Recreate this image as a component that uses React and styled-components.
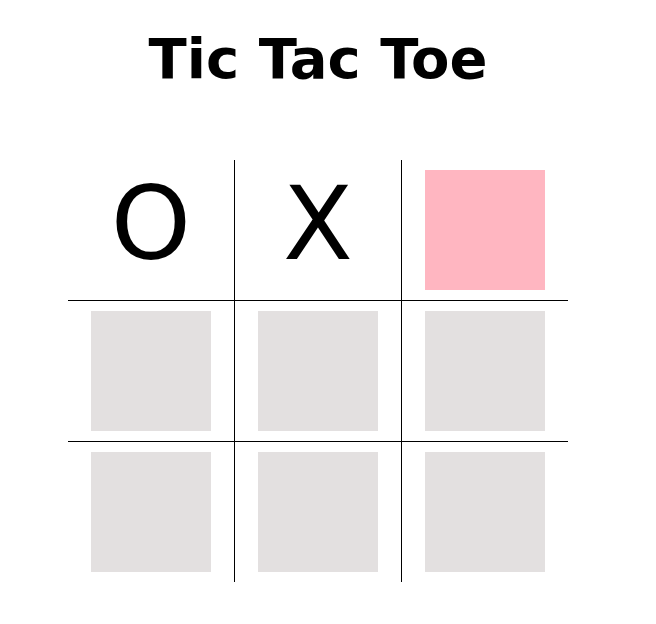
import React from 'react';
import styled, { createGlobalStyle } from 'styled-components';

const Global = createGlobalStyle`
body {
  margin: 0;
  background: white;
  font-family: "DejaVu Sans", Verdana, sans-serif;
}
`

const Page = styled.div`
width: 636px;
display: flex;
flex-direction: column;
align-items: center;
`

const Title = styled.h1`
margin: 27px 0 0;
font-size: 56px;
line-height: 64px;
font-weight: bold;
color: black;
`

const Board = styled.div`
margin-top: 69px;
width: 500px;
display: grid;
grid-template-columns: 167px 167px 166px;
`

const Cell = styled.div`
padding: 10px 23px;
border-right: ${p => (p.$col < 2 ? '1px solid black' : 'none')};
border-bottom: ${p => (p.$row < 2 ? '1px solid black' : 'none')};
display: flex;
justify-content: center;
`

const Square = styled.button`
width: 120px;
height: 120px;
border: none;
padding: 0;
background-color: ${p => (p.$hover ? '#ffb6c1' : '#e3e0e0')};
cursor: pointer;
`

const Mark = styled.div`
width: 120px;
height: 120px;
text-align: center;
font-size: 102px;
line-height: 108px;
color: black;
`

const board = ['O', 'X', null, null, null, null, null, null, null]

const App = () => {
    return (
        <Page>
        <Global />
        <Title>Tic Tac Toe</Title>
        <Board>
            {board.map((v, i) => (
                <Cell key={i} $row={Math.floor(i / 3)} $col={i % 3}>
                    {v ? <Mark>{v}</Mark> : <Square $hover={i === 2} />}
                </Cell>
            ))}
        </Board>
        </Page>
    )
}

export default App
